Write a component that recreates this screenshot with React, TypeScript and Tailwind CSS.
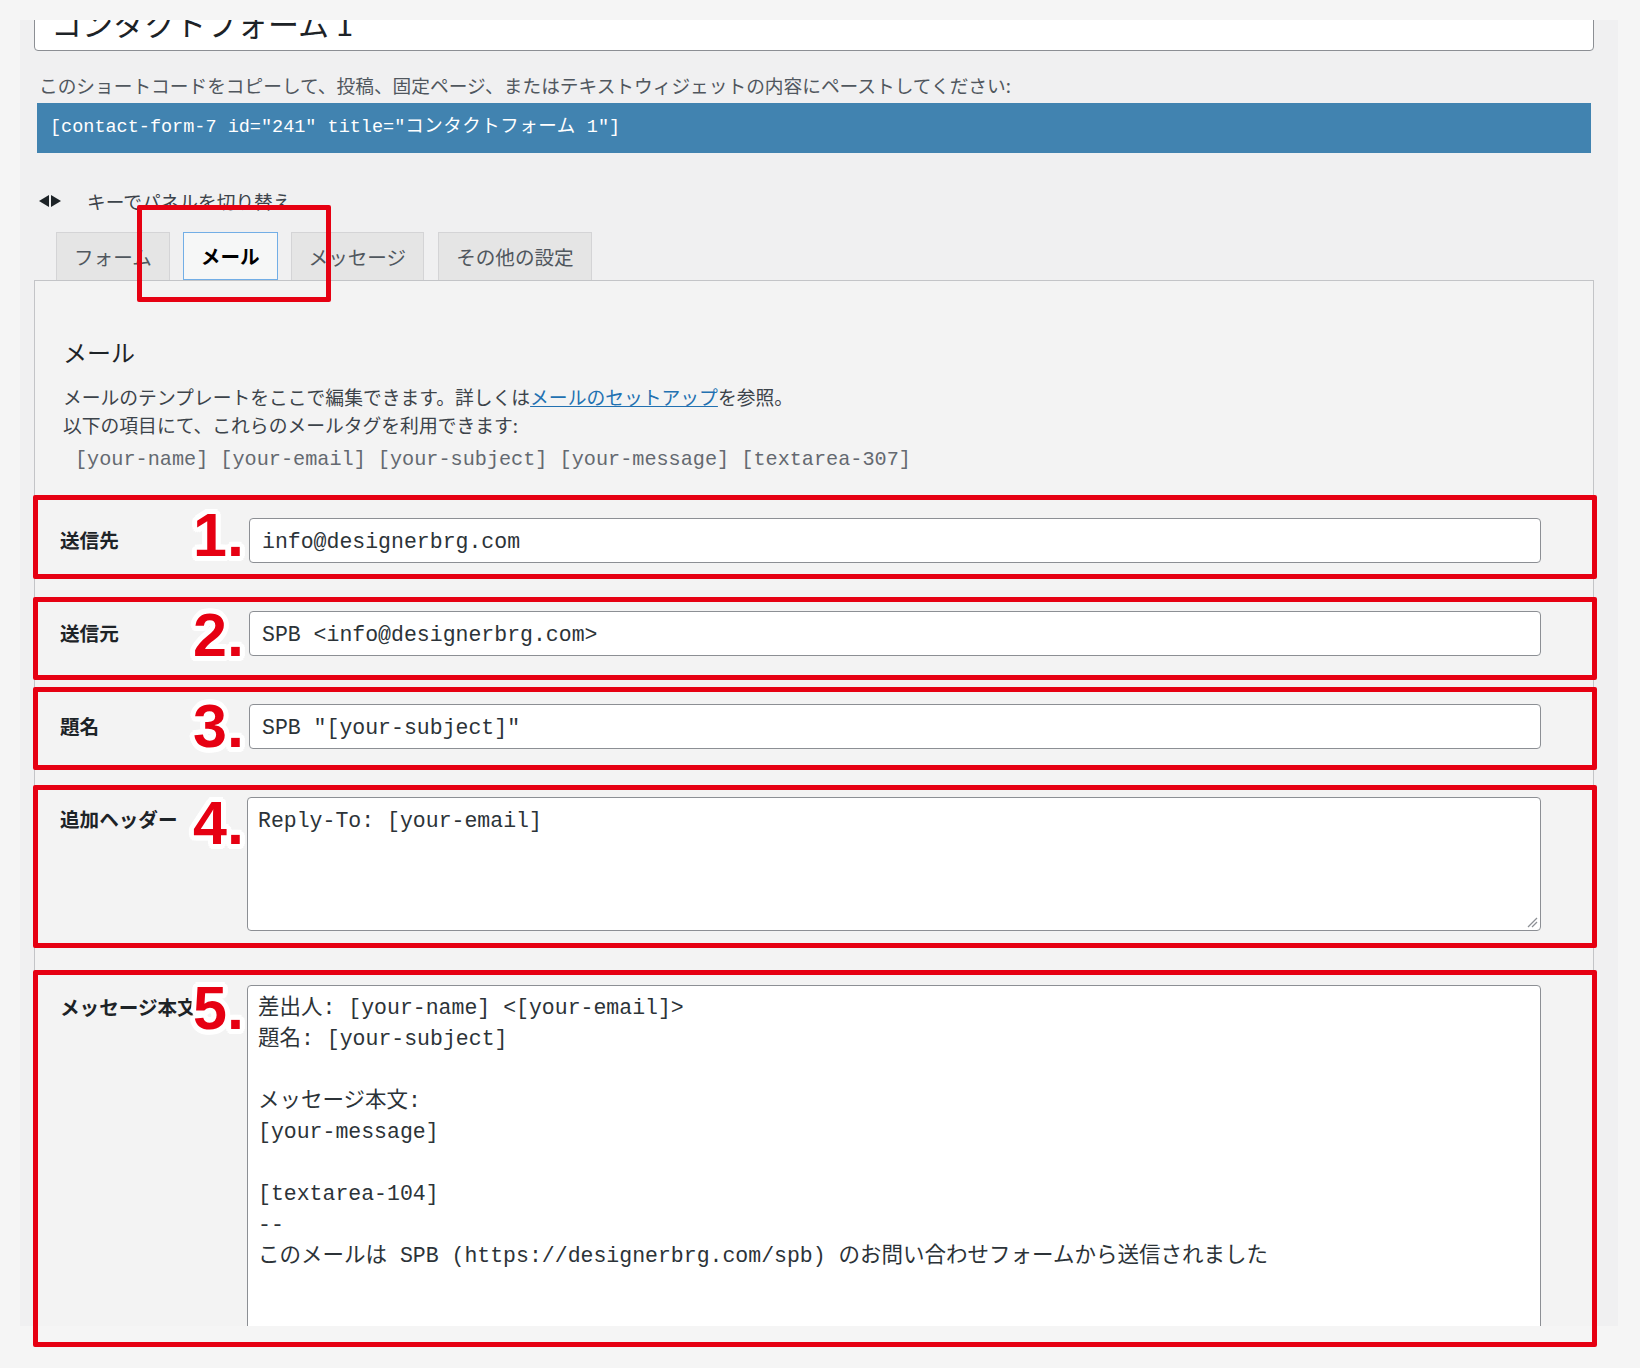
import React from "react";

const OUTLINE =
  "[text-shadow:5px_0_0_#fff,4.6px_1.9px_0_#fff,3.5px_3.5px_0_#fff,1.9px_4.6px_0_#fff,0_5px_0_#fff,-1.9px_4.6px_0_#fff,-3.5px_3.5px_0_#fff,-4.6px_1.9px_0_#fff,-5px_0_0_#fff,-4.6px_-1.9px_0_#fff,-3.5px_-3.5px_0_#fff,-1.9px_-4.6px_0_#fff,0_-5px_0_#fff,1.9px_-4.6px_0_#fff,3.5px_-3.5px_0_#fff,4.6px_-1.9px_0_#fff,2.5px_0_0_#fff,-2.5px_0_0_#fff,0_2.5px_0_#fff,0_-2.5px_0_#fff]";

function Num({ n, top }: { n: string; top: string }) {
  return (
    <span
      className={`absolute left-[193px] ${top} text-[61px] leading-none font-bold font-['Liberation_Sans',Arial,sans-serif] text-[#e60012] ${OUTLINE}`}
    >
      {n}
    </span>
  );
}

function Row({
  label,
  mt,
  children,
}: {
  label: string;
  mt: string;
  children: React.ReactNode;
}) {
  return (
    <div className={`flex ${mt}`}>
      <div className="w-[187px] shrink-0 pt-[8px] leading-[28px] text-[19.6px] font-bold text-[#1d2327] whitespace-nowrap overflow-hidden">
        {label}
      </div>
      <div className="flex-1 min-w-0">{children}</div>
    </div>
  );
}

function TextInput({ value }: { value: string }) {
  return (
    <div className="ml-[2px] h-[45px] bg-white border border-[#8c8f94] rounded-[4px] flex items-center pt-[4px] pl-[12px] font-['Liberation_Mono','Noto_Sans_CJK_JP',monospace] text-[21.5px] text-[#2c3338] whitespace-pre">
      {value}
    </div>
  );
}

export default function App() {
  const body = [
    "差出人: [your-name] <[your-email]>",
    "題名: [your-subject]",
    "",
    "メッセージ本文:",
    "[your-message]",
    "",
    "[textarea-104]",
    "--",
    "このメールは SPB (https://designerbrg.com/spb) のお問い合わせフォームから送信されました",
  ];
  return (
    <div className="relative w-[1640px] h-[1368px] bg-[#f5f5f5] overflow-hidden font-['Noto_Sans_CJK_JP',sans-serif]">
      <div className="pt-[20px] pl-[20px]">
        <div className="w-[1598px] h-[1306px] bg-[#f0f0f1] overflow-hidden flex flex-col">
          {/* title input */}
          <div className="-mt-[29px] ml-[14px] w-[1560px] h-[60px] shrink-0 bg-white border border-[#8c8f94] rounded-[4px] flex items-end pl-[16px] pb-[12px] text-[31px] leading-none text-[#1d2327]">
            コンタクトフォーム 1
          </div>
          {/* hint */}
          <div className="mt-[21px] ml-[19px] text-[18.7px] leading-[26px] text-[#50575e] shrink-0 whitespace-nowrap">
            このショートコードをコピーして、投稿、固定ページ、またはテキストウィジェットの内容にペーストしてください:
          </div>
          {/* shortcode */}
          <div className="mt-[5px] ml-[17px] w-[1554px] h-[50px] shrink-0 bg-[#4183b0] flex items-center pl-[13px] text-white text-[18.5px] font-['Liberation_Mono','Noto_Sans_CJK_JP',monospace] whitespace-pre">
            [contact-form-7 id="241" title="<span className="tracking-[0.5px]">コンタクトフォーム</span> 1"]
          </div>
          {/* keyboard hint */}
          <div className="mt-[35px] ml-[19px] h-[26px] flex items-center shrink-0">
            <svg width="23" height="12" viewBox="0 0 23 12" className="shrink-0">
              <polygon points="0,6 10,0 10,12" fill="#1d2327" />
              <polygon points="12,0 22,6 12,12" fill="#1d2327" />
            </svg>
            <span className="ml-[25px] text-[18.7px] leading-[26px] text-[#3c434a]">
              キーでパネルを切り替え
            </span>
          </div>
          {/* tabs */}
          <div className="mt-[18px] ml-[36px] flex gap-[13px] h-[48px] shrink-0">
            <div className="h-[48px] px-[17px] flex items-center border border-b-0 border-[#d4d4d6] bg-[#e5e5e5] text-[19.6px] text-[#50575e]">
              フォーム
            </div>
            <div className="h-[48px] px-[17px] flex items-center border border-[#72aee6] bg-[#f6f7f7] text-[19.6px] font-bold text-black">
              メール
            </div>
            <div className="h-[48px] px-[17px] flex items-center border border-b-0 border-[#d4d4d6] bg-[#e5e5e5] text-[19.6px] text-[#50575e]">
              メッセージ
            </div>
            <div className="ml-[1px] h-[48px] px-[17px] flex items-center border border-b-0 border-[#d4d4d6] bg-[#e5e5e5] text-[19.6px] text-[#50575e]">
              その他の設定
            </div>
          </div>
          {/* panel */}
          <div className="ml-[14px] w-[1560px] h-[1200px] shrink-0 border border-[#c3c4c7] bg-[#f3f3f3] pt-[55px] pl-[25px] pr-[52px] flex flex-col">
            <h2 className="ml-[3px] text-[24px] leading-[32px] font-normal text-[#1d2327]">メール</h2>
            <div className="ml-[3px] mt-[15px] text-[18.8px] leading-[28px] text-[#3c434a] whitespace-nowrap">
              <div>
                メールのテンプレートをここで編集できます。詳しくは
                <span className="text-[#2271b1] underline">メールのセットアップ</span>
                を参照。
              </div>
              <div>以下の項目にて、これらのメールタグを利用できます:</div>
            </div>
            <div className="mt-[7px] ml-[15px] leading-[28px] text-[20.2px] text-[#646970] font-['Liberation_Mono',monospace] whitespace-pre">
              [your-name] [your-email] [your-subject] [your-message] [textarea-307]
            </div>

            <Row label="送信先" mt="mt-[44px]">
              <TextInput value="info@designerbrg.com" />
            </Row>
            <Row label="送信元" mt="mt-[48px]">
              <TextInput value="SPB <info@designerbrg.com>" />
            </Row>
            <Row label="題名" mt="mt-[48px]">
              <TextInput value={'SPB "[your-subject]"'} />
            </Row>
            <Row label="追加ヘッダー" mt="mt-[48px]">
              <div className="relative h-[134px] bg-white border border-[#8c8f94] rounded-[4px] pt-[8px] pl-[10px] leading-[31px] text-[21.5px] text-[#2c3338] font-['Liberation_Mono','Noto_Sans_CJK_JP',monospace] whitespace-pre">
                Reply-To: [your-email]
                <svg width="12" height="12" viewBox="0 0 12 12" className="absolute right-[2px] bottom-[2px]">
                  <line x1="11" y1="2" x2="2" y2="11" stroke="#8c8f94" strokeWidth="1.2" />
                  <line x1="11" y1="6" x2="6" y2="11" stroke="#8c8f94" strokeWidth="1.2" />
                </svg>
              </div>
            </Row>
            <Row label="メッセージ本文" mt="mt-[54px]">
              <div className="h-[420px] bg-white border border-[#8c8f94] rounded-[4px] pt-[7px] pl-[10px] leading-[31px] text-[21.5px] text-[#2c3338] font-['Liberation_Mono','Noto_Sans_CJK_JP',monospace] whitespace-pre">
                {body.map((l, i) => (
                  <div key={i} className="h-[31px]">
                    {l}
                  </div>
                ))}
              </div>
            </Row>
          </div>
        </div>
      </div>

      {/* annotations */}
      <div className="absolute left-[137px] top-[205px] w-[194px] h-[97px] border-[5px] border-[#e60012] rounded-[2px]" />
      <div className="absolute left-[33px] top-[495px] w-[1564px] h-[84px] border-[5px] border-[#e60012] rounded-[2px]" />
      <div className="absolute left-[33px] top-[597px] w-[1564px] h-[83px] border-[5px] border-[#e60012] rounded-[2px]" />
      <div className="absolute left-[33px] top-[687px] w-[1564px] h-[83px] border-[5px] border-[#e60012] rounded-[2px]" />
      <div className="absolute left-[33px] top-[785px] w-[1564px] h-[163px] border-[5px] border-[#e60012] rounded-[2px]" />
      <div className="absolute left-[33px] top-[970px] w-[1564px] h-[377px] border-[5px] border-[#e60012] rounded-[2px]" />

      <Num n="1." top="top-[505px]" />
      <Num n="2." top="top-[605px]" />
      <Num n="3." top="top-[696px]" />
      <Num n="4." top="top-[793px]" />
      <Num n="5." top="top-[978px]" />
    </div>
  );
}
